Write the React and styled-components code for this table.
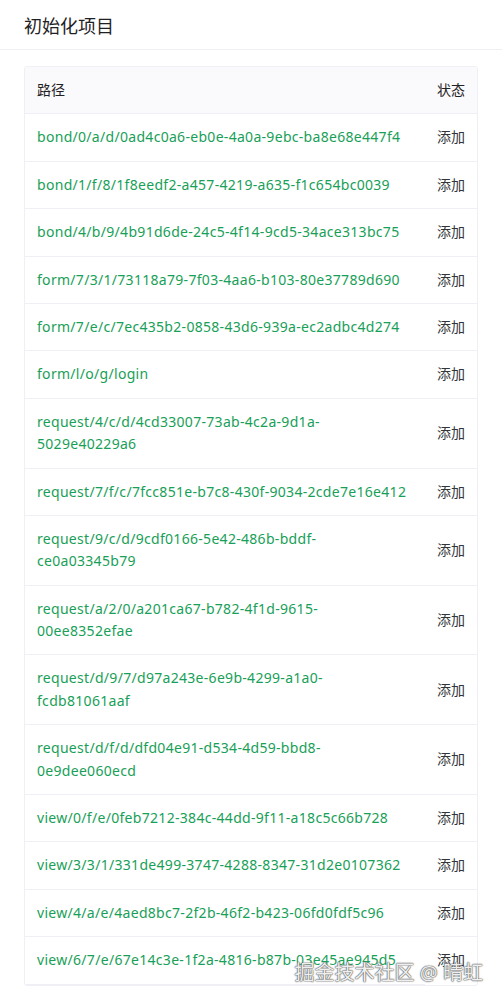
import React from "react";
import styled, { createGlobalStyle } from "styled-components";

const GlobalStyle = createGlobalStyle`
  html, body {
    margin: 0;
    padding: 0;
    background: #fff;
  }
  body {
    font-family: "Noto Sans", "Noto Sans CJK SC", sans-serif;
    color: rgb(51, 54, 57);
  }
`;

const rows = [
  "bond/0/a/d/0ad4c0a6-eb0e-4a0a-9ebc-ba8e68e447f4",
  "bond/1/f/8/1f8eedf2-a457-4219-a635-f1c654bc0039",
  "bond/4/b/9/4b91d6de-24c5-4f14-9cd5-34ace313bc75",
  "form/7/3/1/73118a79-7f03-4aa6-b103-80e37789d690",
  "form/7/e/c/7ec435b2-0858-43d6-939a-ec2adbc4d274",
  "form/l/o/g/login",
  "request/4/c/d/4cd33007-73ab-4c2a-9d1a-5029e40229a6",
  "request/7/f/c/7fcc851e-b7c8-430f-9034-2cde7e16e412",
  "request/9/c/d/9cdf0166-5e42-486b-bddf-ce0a03345b79",
  "request/a/2/0/a201ca67-b782-4f1d-9615-00ee8352efae",
  "request/d/9/7/d97a243e-6e9b-4299-a1a0-fcdb81061aaf",
  "request/d/f/d/dfd04e91-d534-4d59-bbd8-0e9dee060ecd",
  "view/0/f/e/0feb7212-384c-44dd-9f11-a18c5c66b728",
  "view/3/3/1/331de499-3747-4288-8347-31d2e0107362",
  "view/4/a/e/4aed8bc7-2f2b-46f2-b423-06fd0fdf5c96",
  "view/6/7/e/67e14c3e-1f2a-4816-b87b-03e45ae945d5",
];

export default function App() {
  return (
    <Page>
      <GlobalStyle />
      <Header>
        <h1>初始化项目</h1>
      </Header>
      <Content>
        <TableWrap>
          <Table>
            <thead>
              <tr>
                <Th>路径</Th>
                <Th $right>状态</Th>
              </tr>
            </thead>
            <tbody>
              {rows.map((path, i) => (
                <tr key={i}>
                  <Td>
                    <PathLink>{path}</PathLink>
                  </Td>
                  <Td $right $last={i === rows.length - 1}>
                    添加
                  </Td>
                </tr>
              ))}
            </tbody>
          </Table>
        </TableWrap>
      </Content>
      <Watermark>掘金技术社区 @ 晴虹</Watermark>
    </Page>
  );
}

const Page = styled.div`
  position: relative;
  width: 502px;
  min-height: 996px;
  background: #fff;
`;

const Header = styled.div`
  height: 50px;
  padding: 0 24px;
  display: flex;
  align-items: center;
  border-bottom: 1px solid #efeff5;
  box-sizing: border-box;

  h1 {
    margin: 0;
    font-size: 18px;
    font-weight: 400;
    color: rgb(31, 34, 37);
  }
`;

const Content = styled.div`
  padding: 16px 24px;
`;

const TableWrap = styled.div`
  border: 1px solid #efeff5;
  border-radius: 3px;
  overflow: hidden;
`;

const Table = styled.table`
  width: 100%;
  border-collapse: collapse;
  font-size: 14px;
  line-height: 1.6;
`;

const Th = styled.th`
  background: #fafafc;
  font-weight: 400;
  color: rgb(31, 34, 37);
  text-align: ${(p) => (p.$right ? "right" : "left")};
  padding: 12px;
  border-bottom: 1px solid #efeff5;
  white-space: nowrap;
`;

const Td = styled.td`
  padding: 12px;
  text-align: ${(p) => (p.$right ? "right" : "left")};
  border-bottom: ${(p) => (p.$last ? "none" : "1px solid #efeff5")};
  white-space: ${(p) => (p.$right ? "nowrap" : "normal")};
  word-break: normal;
`;

const PathLink = styled.span`
  color: #18a058;
  letter-spacing: 0.3px;
`;

const Watermark = styled.div`
  position: absolute;
  right: 19px;
  bottom: 16px;
  font-size: 20px;
  color: rgba(255, 255, 255, 0.92);
  text-shadow: 0 0 1px #555, 0 0 1px #555, 0 0 2px #888;
  pointer-events: none;
`;
